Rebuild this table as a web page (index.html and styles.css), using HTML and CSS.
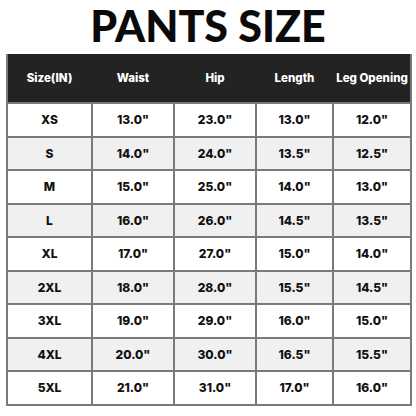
FILE: index.html
```html
<!DOCTYPE html>
<html>
<head>
<meta charset="utf-8">
<link rel="stylesheet" href="styles.css">
</head>
<body>
<div class="page">
  <h1 class="title">PANTS SIZE</h1>
  <table class="chart">
    <colgroup>
      <col class="c1"><col class="c2"><col class="c3"><col class="c4"><col class="c5">
    </colgroup>
    <thead>
      <tr><th>Size(IN)</th><th>Waist</th><th>Hip</th><th>Length</th><th>Leg Opening</th></tr>
    </thead>
    <tbody>
      <tr><td>XS</td><td>13.0"</td><td>23.0"</td><td>13.0"</td><td>12.0"</td></tr>
      <tr><td>S</td><td>14.0"</td><td>24.0"</td><td>13.5"</td><td>12.5"</td></tr>
      <tr><td>M</td><td>15.0"</td><td>25.0"</td><td>14.0"</td><td>13.0"</td></tr>
      <tr><td>L</td><td>16.0"</td><td>26.0"</td><td>14.5"</td><td>13.5"</td></tr>
      <tr><td>XL</td><td>17.0"</td><td>27.0"</td><td>15.0"</td><td>14.0"</td></tr>
      <tr><td>2XL</td><td>18.0"</td><td>28.0"</td><td>15.5"</td><td>14.5"</td></tr>
      <tr><td>3XL</td><td>19.0"</td><td>29.0"</td><td>16.0"</td><td>15.0"</td></tr>
      <tr><td>4XL</td><td>20.0"</td><td>30.0"</td><td>16.5"</td><td>15.5"</td></tr>
      <tr><td>5XL</td><td>21.0"</td><td>31.0"</td><td>17.0"</td><td>16.0"</td></tr>
    </tbody>
  </table>
</div>
</body>
</html>
```
FILE: styles.css
```css
html, body {
  margin: 0;
  padding: 0;
  background: #ffffff;
}
.page {
  width: 416px;
  height: 416px;
  box-sizing: border-box;
  padding: 0 6px;
  font-family: Inter, "Open Sans", sans-serif;
}
.title {
  margin: 0;
  height: 54px;
  line-height: 51px;
  text-align: center;
  font-family: Lato, Inter, sans-serif;
  font-size: 43px;
  font-weight: 900;
  color: #0a0a0a;
}
.chart {
  width: 404px;
  border-collapse: collapse;
  table-layout: fixed;
}
.c1 { width: 85px; }
.c2 { width: 82px; }
.c3 { width: 82px; }
.c4 { width: 77px; }
.c5 { width: 78px; }
.chart th {
  height: 48px;
  background: #232323;
  color: #ffffff;
  font-size: 11.5px;
  font-weight: 800;
  border: 2px solid #7a7a7a;
  border-top: none;
  padding: 0;
  white-space: nowrap;
}
.chart thead th { border-left-color: #232323; border-right-color: #232323; }
.chart thead th:first-child { border-left-color: #7a7a7a; }
.chart thead th:last-child { border-right-color: #7a7a7a; }
.chart td {
  height: 33.5px;
  box-sizing: border-box;
  text-align: center;
  font-size: 12px;
  font-weight: 800;
  color: #111;
  border: 2px solid #7a7a7a;
  padding: 0;
}
.chart tbody tr:nth-child(even) td {
  background: #f0f0f0;
}
```
